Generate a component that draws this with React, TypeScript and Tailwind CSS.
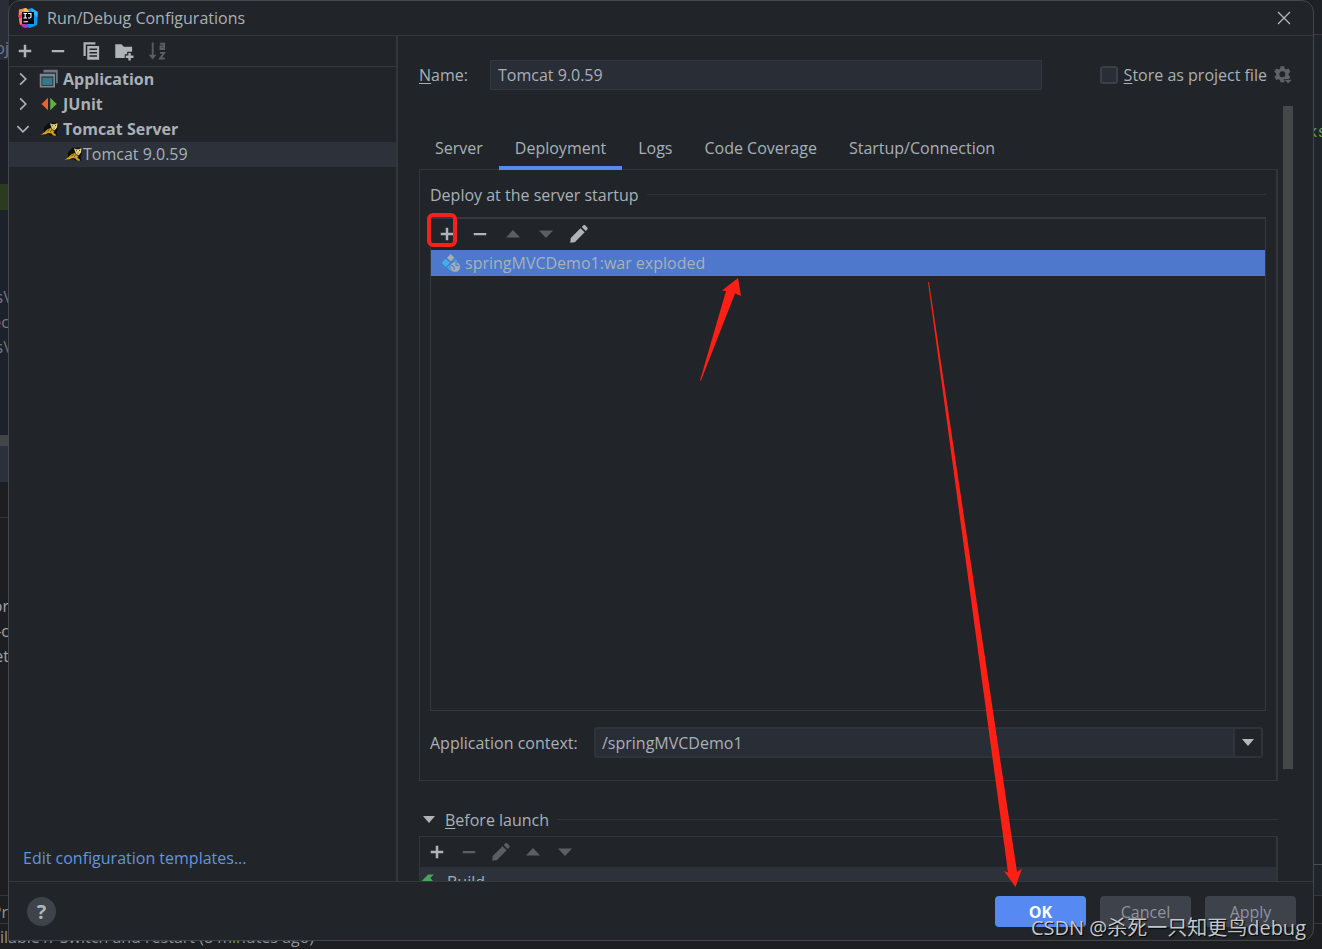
import { useState, type ReactNode } from 'react'
import clsx from 'clsx'

const TABS = ['Server', 'Deployment', 'Logs', 'Code Coverage', 'Startup/Connection']

/* ---------- icons, all on a 16px grid ---------- */

function Icon({ children, className = 'size-5' }: { children: ReactNode; className?: string }) {
  return (
    <svg viewBox="0 0 16 16" className={clsx('shrink-0', className)} fill="currentColor" aria-hidden="true">
      {children}
    </svg>
  )
}

const PlusIcon = () => <Icon><path d="M7 3h2v4h4v2H9v4H7V9H3V7h4z" /></Icon>
const MinusIcon = () => <Icon><path d="M3 7.2h10v1.8H3z" /></Icon>
const UpIcon = () => <Icon><path d="M8 4.800l5.600 6H2.400z" /></Icon>
const DownIcon = () => <Icon><path d="M8 11.200l5.600-6H2.400z" /></Icon>

const PencilIcon = () => (
  <Icon>
    <path d="M9.200 3.300l3.300 3.300-7.900 7.900-3.600.5.400-3.800z" />
    <path d="M10.200 2.400l1.200-1.200c.5-.5 1.200-.5 1.700 0l1.500 1.500c.5.5.5 1.200 0 1.700l-1.200 1.200z" />
  </Icon>
)

const CopyIcon = () => (
  <Icon>
    <path d="M2 1h9.500v1.800H3.800V12H2z" />
    <path fillRule="evenodd" d="M5 4h9.500v11H5zM6.800 6v1.200h6V6zm0 2.700v1.200h6V8.700zm0 2.700v1.200h6v-1.200z" />
  </Icon>
)

const NewFolderIcon = () => (
  <Icon>
    <path d="M1 2.500h5l1.800 2H14.500V8.500H10.500V10.500H8.600V13.500H1z" />
    <path d="M11.500 9.500h1.900v2.100h2.200v1.900h-2.200v2.100h-1.900v-2.100H9.400v-1.900h2.100z" />
  </Icon>
)

const SortIcon = () => (
  <Icon>
    <path d="M3.800 1.200h1.500v9.800h2.300l-3.100 3.700L1.400 11h2.400z" />
    <g fill="none" stroke="currentColor" strokeWidth="1.500">
      <path d="M10.500 2.200h3.200v4.200h-2.900V4.400h2.900" />
      <path d="M10.300 9.500h3.400l-3.200 4.500h3.700" />
    </g>
  </Icon>
)

const ApplicationIcon = () => (
  <Icon>
    <path d="M3.600 .6H15v10.800h-1.500V2.800H3.600z" fill="#6d7883" />
    <path fillRule="evenodd" d="M.6 3.800h12.200v11H.6zM2 6v7.400h9.400V6z" fill="#7d8891" />
    <path d="M2.600 6.800h8.200v6H2.600z" fill="#35788a" />
  </Icon>
)

const JUnitIcon = () => (
  <Icon>
    <path d="M7.200 3v10L2 8z" fill="#e8642c" />
    <path d="M9 3v10l5.200-5z" fill="#62b045" />
  </Icon>
)

const TomcatIcon = () => (
  <Icon>
    <path d="M7.500 3h7.500v5.500l-1 1.500.8 3.200H9.300L8 11.800l-3.500 1.400-.5-2.600V6.500z" fill="#100e0a" />
    <path d="M1.200 12.800l3.100-2.300 2.500-2.300 2.600-1 1 1.500 2 .8-.9 1.500 1.900 1.300.3 1-2.300-.2-1.700-1.800-2.500-.2-1.600 1.100-2.900.1z" fill="#d1a31f" />
    <path d="M8.800 3.300l1.900.8h2.100l2-.9-.4 3.500-1.800 2.200-2.200-.8z" fill="#ead684" />
    <path d="M10.300 5l.9.700M13.600 4.900l-.9.800M11.500 7.300h.9" stroke="#3b2c0a" strokeWidth=".7" />
    <path d="M6.800 9.600l1.700-1.400M8.800 10.300l1.200-1.100" stroke="#2b2008" strokeWidth=".6" />
  </Icon>
)

const ArtifactIcon = () => (
  <Icon>
    <path d="M7.800 .8l3 3-3 3-3-3z" fill="#a4aeb8" />
    <path d="M3.800 4.500l3.300 3.300-3.300 3.300L.5 7.800z" fill="#3fb1e6" />
    <path d="M7.700 8.700l2.800 2.800-2.800 2.800-3-3z" fill="#3fb1e6" />
    <path d="M11.500 4.900l1.900 1.900-3.200.5-1.200.3z" fill="#3fb1e6" />
    <circle cx="11.300" cy="11.200" r="4.200" fill="#a4aeb8" stroke="#4d78cc" strokeWidth=".6" />
    <path d="M8.200 9.800l2.200 1.300.2 2.300M12.200 7.800l-.3 1.700 2.300.9" fill="none" stroke="#4d78cc" strokeWidth=".9" />
  </Icon>
)

const GearIcon = () => (
  <Icon>
    <path
      fillRule="evenodd"
      d="M6 1h3l.4 1.900 1.200.6 1.800-.7 1.500 2.600-1.400 1.300v1.400l1.400 1.300-1.500 2.600-1.800-.7-1.200.6L9 13.800H6l-.4-1.900-1.200-.6-1.800.7L1.100 9.400l1.400-1.300V6.700L1.100 5.400l1.500-2.600 1.800.7 1.200-.6zM7.500 5a2.400 2.400 0 100 4.800 2.400 2.400 0 000-4.800z"
    />
    <path d="M8.800 11.600h6.700L12.100 15z" stroke="#212529" strokeWidth=".6" />
  </Icon>
)

const HammerIcon = () => (
  <Icon>
    <path d="M1 7.500L6.500 2H11L8.300 4.800 14.500 12l-2.300 2.300L5.800 7.200 3.500 9.800z" fill="#4fa25e" />
  </Icon>
)

const ChevronIcon = ({ open }: { open: boolean }) => (
  <Icon>
    <path d={open ? 'M3.500 5.700L8 10.200l4.500-4.500' : 'M5.700 3.500L10.200 8l-4.500 4.500'} fill="none" stroke="currentColor" strokeWidth="1.400" />
  </Icon>
)

const IdeaLogo = () => (
  <svg viewBox="0 0 20 20" className="size-5 shrink-0" aria-hidden="true">
    <path d="M1 1.500L8 0l3 3-7 8-3.500-2z" fill="#f98a3c" />
    <path d="M5 1l3-1 4 4-5 1z" fill="#f6c04f" />
    <path d="M.5 8L5 5l3 9-1 6-5-3.500z" fill="#e8318c" />
    <path d="M1 11l4-2 1 5-4 3z" fill="#fb7b5c" />
    <path d="M10 1l4-1 6 4-1 13-7 3-5-2 8-6z" fill="#1295f0" />
    <path d="M13 .5L19.500 4v5L15 6z" fill="#30b8f5" />
    <path d="M6 16l5 1-2 3-5-1z" fill="#a43bd0" />
    <path d="M4 4h12v12H4z" fill="#0b0710" />
    <path d="M5.500 5.500h3.500M7.200 5.500v4.500M5.500 10H9M10 5.500h3v3.300q0 1.200-1.200 1.200H10M5.500 13.800h4.500" fill="none" stroke="#fff" strokeWidth="1.100" />
  </svg>
)

/* ---------- small building blocks ---------- */

function ToolButton({ label, disabled, children }: { label: string; disabled?: boolean; children: ReactNode }) {
  return (
    <button
      type="button"
      aria-label={label}
      disabled={disabled}
      className="flex h-full w-8 items-center justify-center text-[#afb4b9] disabled:text-[#5b5f63]"
    >
      {children}
    </button>
  )
}

function TreeRow({ label, icon, open }: { label: string; icon: ReactNode; open: boolean }) {
  return (
    <div className="flex h-[25px] items-center pb-0.5 pl-1">
      <button type="button" aria-label={label} aria-expanded={open} className="text-[#a9b0b8]">
        <ChevronIcon open={open} />
      </button>
      <span className="ml-1.5 mr-1">{icon}</span>
      <span className="font-bold">{label}</span>
    </div>
  )
}

/* ---------- IDE window behind the dialog ---------- */

function EditorBackdrop() {
  return (
    <div className="absolute inset-0 flex flex-col bg-[#1c1e22] text-[#767b83]" aria-hidden="true">
      <div className="flex flex-1 justify-between">
        <div className="flex w-[9px] flex-col items-end overflow-hidden whitespace-nowrap">
          <div className="flex h-[60px] w-full items-end justify-end bg-[#2a2d38]">oj</div>
          <div className="h-[124px] w-full bg-[#1d2029]" />
          <div className="h-[26px] w-full bg-[#2b3b20]" />
          <div className="flex h-[225px] w-full flex-col items-end bg-[#1d212b] pt-[75px] leading-[25px]">
            <p>s\</p>
            <p>ec</p>
            <p>s\</p>
          </div>
          <div className="h-[11px] w-full bg-[#434649]" />
          <div className="h-9 w-full bg-[#2c303d]" />
          <div className="h-9 w-full border-b border-[#35383d]" />
          <div className="flex flex-col items-end pt-[76px] leading-[25px] text-[#a0a5ab]">
            <p>or</p>
            <p>-c</p>
            <p>et</p>
          </div>
        </div>
        <div className="w-[9px] overflow-hidden bg-[#20242b]">
          <div className="h-[35px] border-b border-[#34383e] bg-[#1e2126]" />
          <div className="flex h-[830px] justify-center border-b border-[#4a4d50] pt-[86px] font-['Liberation_Mono'] leading-[25px] text-[#6f9f55]">
            ks
          </div>
        </div>
      </div>
      <div className="h-7 overflow-hidden border-t border-[#34383e] leading-8 text-[#90959b]">
        <p className="flex w-2 justify-end">Pr</p>
      </div>
      <div className="h-[26px] overflow-hidden border-t border-[#34383e] leading-[26px] text-[#90959b]">
        ilable // Switch and restart (8 minutes ago)
      </div>
    </div>
  )
}

/* ---------- dialog parts ---------- */

function Sidebar() {
  return (
    <aside className="flex w-[389px] shrink-0 flex-col border-r-2 border-[#31363b]">
      <div className="flex h-[31px] shrink-0 gap-px border-b border-[#34393e]">
        <ToolButton label="Add configuration"><PlusIcon /></ToolButton>
        <ToolButton label="Remove configuration"><MinusIcon /></ToolButton>
        <ToolButton label="Copy configuration"><CopyIcon /></ToolButton>
        <ToolButton label="New folder"><NewFolderIcon /></ToolButton>
        <ToolButton label="Sort" disabled><SortIcon /></ToolButton>
      </div>
      <nav className="flex-1" aria-label="Configurations">
        <TreeRow label="Application" icon={<ApplicationIcon />} open={false} />
        <TreeRow label="JUnit" icon={<JUnitIcon />} open={false} />
        <TreeRow label="Tomcat Server" icon={<TomcatIcon />} open />
        <button type="button" className="flex h-[25px] w-full items-center bg-[#2c313a] pb-0.5 pl-[54px]">
          <TomcatIcon />
          Tomcat 9.0.59
        </button>
      </nav>
      <a href="#templates" className="px-3.5 pb-[11px] text-[#6494dd]">Edit configuration templates...</a>
    </aside>
  )
}

function DeploymentPanel() {
  const [context, setContext] = useState('/springMVCDemo1')
  return (
    <div className="flex min-h-0 flex-1 flex-col border border-r-2 border-[#31363b] px-2.5 pb-[22px]">
      <div className="flex h-[47px] shrink-0 items-center gap-2 pt-0.5">
        <h2>Deploy at the server startup</h2>
        <div className="h-px flex-1 bg-[#2e3338]" />
      </div>
      <div className="flex min-h-0 flex-1 flex-col border border-t-2 border-[#34393e]">
        <div className="flex h-[31px] shrink-0 gap-px pb-0.5">
          <div className="relative">
            <ToolButton label="Add artifact"><PlusIcon /></ToolButton>
            <span className="absolute -left-1 -top-1.5 h-[34px] w-[30px] rounded-md border-4 border-[#f3231b]" />
          </div>
          <ToolButton label="Remove artifact"><MinusIcon /></ToolButton>
          <ToolButton label="Move up" disabled><UpIcon /></ToolButton>
          <ToolButton label="Move down" disabled><DownIcon /></ToolButton>
          <ToolButton label="Edit artifact"><PencilIcon /></ToolButton>
        </div>
        <button type="button" className="flex h-[26px] shrink-0 items-center gap-1 bg-[#4d78cc] pl-2.5">
          <ArtifactIcon />
          springMVCDemo1:war exploded
        </button>
      </div>
      <div className="mt-4 flex h-[31px] shrink-0 items-center pr-[3px]">
        <label htmlFor="context" className="w-[164px]">Application context:</label>
        <div className="flex h-full flex-1 overflow-hidden rounded-[3px] border-2 border-[#2f343a]">
          <input
            id="context"
            value={context}
            onChange={(e) => setContext(e.target.value)}
            className="min-w-0 flex-1 bg-[#292d35] px-1.5 outline-none"
          />
          <button type="button" aria-label="Show contexts" className="flex w-7 items-center justify-center border-l-2 border-[#2f343a]">
            <svg viewBox="0 0 12 7" className="h-[7px] w-3" fill="#b4b9be" aria-hidden="true"><path d="M0 0h12L6 7z" /></svg>
          </button>
        </div>
      </div>
    </div>
  )
}

function BeforeLaunch() {
  return (
    <section className="h-[100px] shrink-0 overflow-hidden pt-[22px]">
      <div className="flex h-[33px] items-center pl-1">
        <svg viewBox="0 0 12 7" className="h-[7px] w-3" fill="#afb4b9" aria-hidden="true"><path d="M0 0h12L6 7z" /></svg>
        <h2 className="ml-2.5 mr-2"><u className="underline-offset-2">B</u>efore launch</h2>
        <div className="h-px flex-1 bg-[#2e3338]" />
      </div>
      <div className="border border-r-2 border-[#31363b]">
        <div className="flex h-[30px] pl-px">
          <ToolButton label="Add task"><PlusIcon /></ToolButton>
          <ToolButton label="Remove task" disabled><MinusIcon /></ToolButton>
          <ToolButton label="Edit task" disabled><PencilIcon /></ToolButton>
          <ToolButton label="Move task up" disabled><UpIcon /></ToolButton>
          <ToolButton label="Move task down" disabled><DownIcon /></ToolButton>
        </div>
        <div className="flex h-[30px] items-center gap-[7px] bg-[#2c313a]">
          <HammerIcon />
          Build
        </div>
      </div>
    </section>
  )
}

function Arrows() {
  return (
    <svg
      viewBox="0 0 1322 949"
      className="pointer-events-none absolute left-0 top-0 h-[949px] w-[1322px]"
      fill="#ff2015"
      aria-hidden="true"
    >
      <path d="M738 278l3 18-6-2.500L701 380.500l-1 0L726 291l-4-.5z" />
      <path d="M928 282l1 0L1017 872l5-3.500-6.500 18.500L1004 871l4 1.500z" />
    </svg>
  )
}

export default function App() {
  const [tab, setTab] = useState('Deployment')
  const [name, setName] = useState('Tomcat 9.0.59')
  const [stored, setStored] = useState(false)

  return (
    <div className="relative h-screen overflow-hidden px-2 pb-2 font-['Open_Sans','Noto_Sans_CJK_SC',sans-serif] text-[16px] leading-6 text-[#a9b0b8]">
      <EditorBackdrop />

      <main className="relative flex h-full flex-col overflow-hidden rounded-xl rounded-bl-none border border-[#43474b] bg-[#212529]">
        <header className="flex h-[35px] shrink-0 items-center gap-[9px] border-b border-[#34393e] pl-[9px] pr-5">
          <IdeaLogo />
          <h1 className="flex-1">Run/Debug Configurations</h1>
          <button type="button" aria-label="Close">
            <svg viewBox="0 0 18 18" className="size-[18px]" stroke="#b4b9be" strokeWidth="1.300" aria-hidden="true">
              <path d="M3 3l12 12M15 3L3 15" />
            </svg>
          </button>
        </header>

        <div className="flex min-h-0 flex-1">
          <Sidebar />
          <div className="flex min-w-0 flex-1 flex-col pl-[21px]">
            <div className="flex h-[69px] shrink-0 items-center pr-5 pt-2">
              <label htmlFor="name" className="w-[71px]"><u className="underline-offset-2">N</u>ame:</label>
              <input
                id="name"
                value={name}
                onChange={(e) => setName(e.target.value)}
                className="h-[30px] min-w-0 flex-1 border border-[#33383e] bg-[#292d35] px-[7px] outline-none"
              />
              <input
                id="store"
                type="checkbox"
                checked={stored}
                onChange={(e) => setStored(e.target.checked)}
                className="ml-[58px] size-[18px] appearance-none rounded-[3px] border-2 border-[#3b4046] bg-[#292d35] checked:bg-[#568af2]"
              />
              <label htmlFor="store" className="mx-1.5"><u className="underline-offset-2">S</u>tore as project file</label>
              <button type="button" aria-label="Storage options" className="text-[#5f6367]"><GearIcon /></button>
            </div>

            <div className="flex min-h-0 flex-1 pr-5">
              <div className="flex min-w-0 flex-1 flex-col">
                <div className="flex h-16 shrink-0 items-end" role="tablist">
                  {TABS.map((t) => (
                    <button
                      key={t}
                      type="button"
                      role="tab"
                      aria-selected={tab === t}
                      onClick={() => setTab(t)}
                      className={clsx('z-10 -mb-px h-[42px] border-b-4 px-4 pt-0.5', tab === t ? 'border-[#568af2]' : 'border-transparent')}
                    >
                      {t}
                    </button>
                  ))}
                </div>
                <DeploymentPanel />
                <BeforeLaunch />
              </div>
              {/* Scrollbar thumb */}
              <div className="mb-28 ml-[5px] mt-px w-2.5 bg-[#45484b]" />
            </div>
          </div>
        </div>

        <footer className="flex h-[59px] shrink-0 items-center gap-3.5 border-t border-[#34393e] pl-[18px] pr-[17px] pt-px">
          <button type="button" aria-label="Help" className="mr-auto size-[29px] rounded-full bg-[#3d424b] text-xl font-bold text-[#afb4b9]">
            ?
          </button>
          <button type="button" className="h-[31px] w-[91px] rounded bg-[#568af2] font-bold text-white">OK</button>
          <button type="button" className="h-[31px] w-[91px] rounded bg-[#3d424b] text-[#8f959d]">Cancel</button>
          <button type="button" className="h-[31px] w-[91px] rounded bg-[#3d424b] text-[#8f959d]">Apply</button>
        </footer>
      </main>

      <Arrows />
      <p className="absolute bottom-1.5 right-4 font-['Open_Sans','Noto_Sans_CJK_SC',sans-serif] text-[20px] leading-[30px] text-[#c5c8cb] [text-shadow:1px_1px_1px_#000]">
        CSDN @杀死一只知更鸟debug
      </p>
    </div>
  )
}
